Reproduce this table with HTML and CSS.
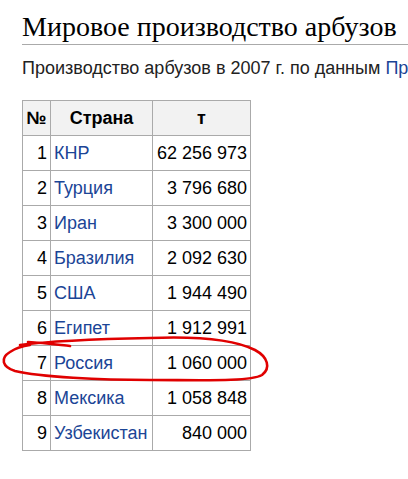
FILE: index.html
```html
<!DOCTYPE html>
<html lang="ru">
<head>
<meta charset="utf-8">
<link rel="stylesheet" href="styles.css">
</head>
<body>
<div class="content">
  <h1 class="title">Мировое производство арбузов</h1>
  <p class="intro">Производство арбузов в 2007 г. по данным <a class="link" href="#">Продовольственной и сельскохозяйственной организации ООН</a></p>
  <table class="data">
    <thead>
      <tr><th class="c-num">№</th><th class="c-country">Страна</th><th class="c-val">т</th></tr>
    </thead>
    <tbody>
      <tr><td class="c-num">1</td><td class="c-country"><a class="link" href="#">КНР</a></td><td class="c-val">62 256 973</td></tr>
      <tr><td class="c-num">2</td><td class="c-country"><a class="link" href="#">Турция</a></td><td class="c-val">3 796 680</td></tr>
      <tr><td class="c-num">3</td><td class="c-country"><a class="link" href="#">Иран</a></td><td class="c-val">3 300 000</td></tr>
      <tr><td class="c-num">4</td><td class="c-country"><a class="link" href="#">Бразилия</a></td><td class="c-val">2 092 630</td></tr>
      <tr><td class="c-num">5</td><td class="c-country"><a class="link" href="#">США</a></td><td class="c-val">1 944 490</td></tr>
      <tr><td class="c-num">6</td><td class="c-country"><a class="link" href="#">Египет</a></td><td class="c-val">1 912 991</td></tr>
      <tr><td class="c-num">7</td><td class="c-country"><a class="link" href="#">Россия</a></td><td class="c-val">1 060 000</td></tr>
      <tr><td class="c-num">8</td><td class="c-country"><a class="link" href="#">Мексика</a></td><td class="c-val">1 058 848</td></tr>
      <tr><td class="c-num">9</td><td class="c-country"><a class="link" href="#">Узбекистан</a></td><td class="c-val">840 000</td></tr>
    </tbody>
  </table>
</div>
<svg class="scribble" width="408" height="479" viewBox="0 0 408 479" aria-hidden="true">
  <path d="M20 345 C 50 341, 100 339, 150 338 C 200 336, 235 340, 255 350 C 268 357, 271 368, 262 375 C 250 382, 200 380, 150 380 C 100 380, 40 377, 15 371 C 2 367, 0 358, 10 352 C 16 348, 22 346, 30 345" />
  <path d="M28 342 C 45 343, 60 345, 70 346" />
</svg>
</body>
</html>
```

FILE: styles.css
```css
html, body {
  margin: 0;
  padding: 0;
  overflow: hidden;
  background: #fff;
}
.content {
  padding-left: 22px;
}
.title {
  margin: 0;
  padding: 12px 0 2px;
  font-family: "Liberation Serif", serif;
  font-weight: normal;
  font-size: 28px;
  line-height: 30px;
  color: #000;
  border-bottom: 1px solid #aaa;
  white-space: nowrap;
}
.intro {
  margin: 12px 0 0;
  font-family: "Liberation Sans", Arial, sans-serif;
  font-size: 18px;
  line-height: 22px;
  color: #222;
  white-space: nowrap;
  overflow: hidden;
}
.link {
  color: #1b4596;
  text-decoration: none;
}
.data {
  margin-top: 21px;
  border-collapse: collapse;
  font-family: "Liberation Sans", Arial, sans-serif;
  font-size: 18px;
  color: #000;
  border: 1px solid #aaa;
}
.data tr {
  height: 35px;
}
.data th, .data td {
  box-sizing: border-box;
  border: 1px solid #aaa;
  padding: 0 3px;
}
.data th {
  background: #f2f2f2;
  font-weight: bold;
  text-align: center;
}
.c-num { width: 28px; text-align: right; }
.data th.c-num { text-align: center; padding: 0 2px; }
.c-country { width: 102px; text-align: left; }
.c-val { width: 98px; text-align: right; }
.scribble {
  position: absolute;
  left: 0;
  top: 0;
  pointer-events: none;
}
.scribble path {
  fill: none;
  stroke: #e00000;
  stroke-width: 2.6;
  stroke-linecap: round;
}
```
